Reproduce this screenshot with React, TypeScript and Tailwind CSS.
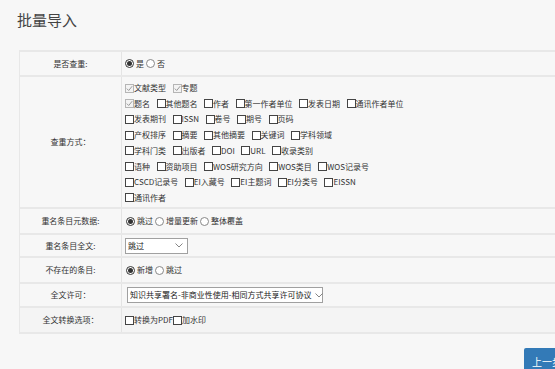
import React from "react";

const font = { fontFamily: '"Noto Sans CJK SC", "Noto Sans", sans-serif' };

const lines: { label: string; checked?: boolean }[][] = [
  [{ label: "文献类型", checked: true }, { label: "专题", checked: true }],
  [
    { label: "题名", checked: true },
    { label: "其他题名" },
    { label: "作者" },
    { label: "第一作者单位" },
    { label: "发表日期" },
    { label: "通讯作者单位" },
  ],
  [{ label: "发表期刊" }, { label: "ISSN" }, { label: "卷号" }, { label: "期号" }, { label: "页码" }],
  [{ label: "产权排序" }, { label: "摘要" }, { label: "其他摘要" }, { label: "关键词" }, { label: "学科领域" }],
  [{ label: "学科门类" }, { label: "出版者" }, { label: "DOI" }, { label: "URL" }, { label: "收录类别" }],
  [{ label: "语种" }, { label: "资助项目" }, { label: "WOS研究方向" }, { label: "WOS类目" }, { label: "WOS记录号" }],
  [{ label: "CSCD记录号" }, { label: "EI入藏号" }, { label: "EI主题词" }, { label: "EI分类号" }, { label: "EISSN" }],
  [{ label: "通讯作者" }],
];

function Box({ checked }: { checked?: boolean }) {
  if (checked) {
    return (
      <span className="inline-flex h-[9px] w-[9px] shrink-0 items-center justify-center border border-[#b5b5b5] bg-[#f3f3f3]">
        <svg width="7" height="7" viewBox="0 0 7 7">
          <path d="M0.8 3.6 L2.7 5.5 L6.2 1.2" fill="none" stroke="#9a9a9a" strokeWidth="1" />
        </svg>
      </span>
    );
  }
  return <span className="inline-block h-[9px] w-[9px] shrink-0 border border-[#444] bg-white" />;
}

function Radio({ checked }: { checked?: boolean }) {
  return (
    <span
      className={`inline-flex h-[9px] w-[9px] shrink-0 items-center justify-center rounded-full border bg-white ${
        checked ? "border-[#333]" : "border-[#888]"
      }`}
    >
      {checked && <span className="h-[5px] w-[5px] rounded-full bg-[#333]" />}
    </span>
  );
}

function Check({ label, checked }: { label: string; checked?: boolean }) {
  return (
    <span className="inline-flex items-center">
      <Box checked={checked} />
      <span>{label}</span>
    </span>
  );
}

function RadioOpt({ label, checked }: { label: string; checked?: boolean }) {
  return (
    <span className="inline-flex items-center gap-[2px]">
      <Radio checked={checked} />
      <span>{label}</span>
    </span>
  );
}

function Select({ value, width }: { value: string; width: string }) {
  return (
    <div
      className={`flex h-[16px] items-center justify-between border border-[#a0a0a0] bg-white pl-[2px] pr-[4px] ${width}`}
    >
      <span className="whitespace-nowrap text-[#222]">{value}</span>
      <svg width="8" height="5" viewBox="0 0 8 5" className="ml-[3px] shrink-0">
        <path d="M0.5 0.5 L4 4 L7.5 0.5" fill="none" stroke="#777" strokeWidth="0.9" />
      </svg>
    </div>
  );
}

function Row({ label, h, bg, children }: { label: string; h: string; bg?: string; children: React.ReactNode }) {
  return (
    <div className={`flex border-b-2 border-[#e8e8e8] ${h} ${bg ?? ""}`}>
      <div className="flex w-[102px] shrink-0 items-center justify-center border-r border-[#e4e4e4] text-[#333]">
        {label}
      </div>
      <div className="flex flex-1 items-center pl-[3px]">{children}</div>
    </div>
  );
}

export default function App() {
  return (
    <div className="h-[369px] w-[555px] overflow-hidden bg-[#f7f7f7] text-[8px] leading-none text-[#333]" style={font}>
      <h1 className="pl-[17px] pt-[12px] text-[15px] font-normal leading-none text-[#444]">批量导入</h1>
      <div className="ml-[19px] mt-[23px] w-[560px] border-t-2 border-l border-[#e8e8e8]">
        <Row label="是否查重:" h="h-[25px]">
          <div className="flex items-center gap-[2px]">
            <RadioOpt label="是" checked />
            <RadioOpt label="否" />
          </div>
        </Row>
        <Row label="查重方式：" h="h-[132px]">
          <div className="flex flex-col gap-[6.7px] pt-[2px]">
            {lines.map((line, i) => (
              <div key={i} className="flex items-center gap-[6.5px]">
                {line.map((c) => (
                  <Check key={c.label} label={c.label} checked={c.checked} />
                ))}
              </div>
            ))}
          </div>
        </Row>
        <Row label="重名条目元数据:" h="h-[26px]">
          <div className="flex items-center gap-[2px] pl-[1px]">
            <RadioOpt label="跳过" checked />
            <RadioOpt label="增量更新" />
            <RadioOpt label="整体覆盖" />
          </div>
        </Row>
        <Row label="重名条目全文:" h="h-[23px]">
          <Select value="跳过" width="w-[63px]" />
        </Row>
        <Row label="不存在的条目:" h="h-[26px]">
          <div className="flex items-center gap-[2px] pl-[1px]">
            <RadioOpt label="新增" checked />
            <RadioOpt label="跳过" />
          </div>
        </Row>
        <Row label="全文许可：" h="h-[24px]">
          <div className="pl-[2px]">
            <Select value="知识共享署名-非商业性使用-相同方式共享许可协议" width="w-[196px]" />
          </div>
        </Row>
        <Row label="全文转换选项：" h="h-[26px]" bg="bg-[#f4f4f4]">
          <div className="flex items-center">
            <Check label="转换为PDF" />
            <Check label="加水印" />
          </div>
        </Row>
      </div>
      <div className="mt-[14px] flex justify-end">
        <button className="-mr-[12px] flex h-[26px] w-[43px] items-start justify-start rounded-[2px] bg-[#337ab7] pl-[8px] pt-[9px] text-[10px] leading-none text-white">
          上一步
        </button>
      </div>
    </div>
  );
}
